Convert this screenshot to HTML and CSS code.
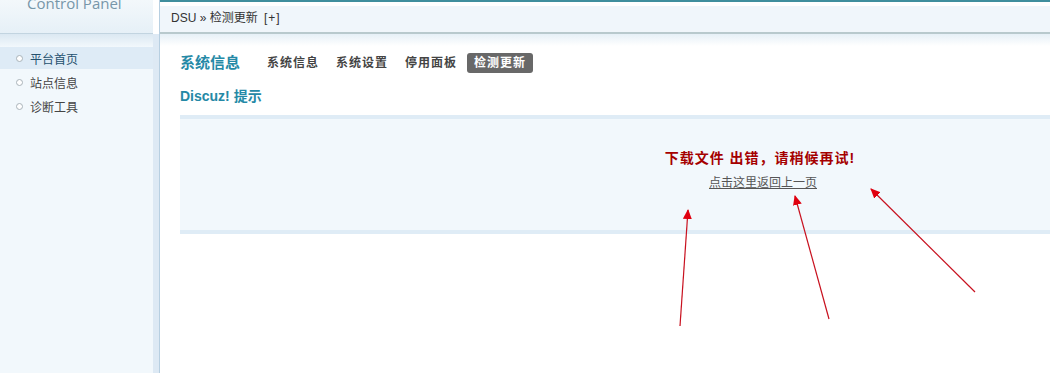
FILE: index.html
```html
<!DOCTYPE html>
<html>
<head>
  <meta charset="utf-8">
  <link rel="stylesheet" href="styles.css">
</head>
<body>
  <div class="page">
    <div class="side">
      <div class="side-head">
        <div class="logo-text">Control Panel</div>
      </div>
      <ul class="menu">
        <li class="menu-item active"><span class="dot"></span>平台首页</li>
        <li class="menu-item"><span class="dot"></span>站点信息</li>
        <li class="menu-item"><span class="dot"></span>诊断工具</li>
      </ul>
    </div>

    <div class="main">
      <div class="topbar">
        <div class="crumb">DSU &raquo; 检测更新 <span class="crumb-add">[+]</span></div>
        <div class="crumb-fade"></div>
      </div>

      <div class="content">
        <div class="tabs">
          <div class="tabs-title">系统信息</div>
          <a class="tab">系统信息</a>
          <a class="tab">系统设置</a>
          <a class="tab">停用面板</a>
          <a class="tab current">检测更新</a>
        </div>

        <div class="section-title">Discuz! 提示</div>

        <div class="notice">
          <div class="notice-msg">下载文件 出错，请稍候再试!</div>
          <a class="notice-link" href="#">点击这里返回上一页</a>
        </div>
      </div>
    </div>

    <!-- annotation arrows drawn over the page -->
    <svg class="marks" width="1050" height="373" viewBox="0 0 1050 373">
      <defs>
        <marker id="head" markerWidth="10" markerHeight="10" refX="9" refY="5" orient="auto" markerUnits="userSpaceOnUse">
          <path d="M0,0.5 L10,5 L0,9.5 Z" fill="#e0000f"/>
        </marker>
      </defs>
      <line x1="680" y1="326" x2="688" y2="210" stroke="#c8101e" stroke-width="1.2" marker-end="url(#head)"/>
      <line x1="829" y1="319" x2="795" y2="196" stroke="#c8101e" stroke-width="1.2" marker-end="url(#head)"/>
      <line x1="975" y1="292" x2="871" y2="189" stroke="#c8101e" stroke-width="1.2" marker-end="url(#head)"/>
    </svg>
  </div>
</body>
</html>
```

FILE: styles.css
```css
body {
  margin: 0;
  width: 1050px;
  height: 373px;
  overflow: hidden;
  background: #fff;
  font-family: "Liberation Sans", "Noto Sans CJK SC", sans-serif;
  font-size: 12px;
  color: #333;
}

.page {
  position: relative;
  display: flex;
  width: 1400px;
  height: 373px;
}

/* left column */
.side {
  width: 159px;
  flex: none;
  border-right: 1px solid #b7cfe1;
  display: flex;
  flex-direction: column;
}

.side-head {
  width: 153px;
  height: 33px;
  border-bottom: 1px solid #c2d4e0;
  background: linear-gradient(#f3f8fb, #e6f0f7);
  overflow: hidden;
}

.logo-text {
  margin: -7px 0 0 27px;
  font-family: "Open Sans", "Liberation Sans", sans-serif;
  font-size: 15px;
  line-height: 20px;
  color: #7796a9;
}

.menu {
  flex: 1;
  list-style: none;
  margin: 0;
  padding: 13px 0 0;
  border-right: 6px solid #dde9f4;
  background: linear-gradient(#dbe8f2, #f2f8fc 13px);
}

.menu-item {
  display: flex;
  align-items: center;
  height: 22px;
  margin-bottom: 2px;
  padding-left: 16px;
  color: #444;
}

.menu-item.active {
  background: #deebf6;
  color: #24506e;
}

.dot {
  width: 5px;
  height: 5px;
  margin-right: 7px;
  border: 1px solid #a9b3b9;
  border-radius: 50%;
  background: #fff;
}

/* right column */
.main {
  flex: 1;
  display: flex;
  flex-direction: column;
}

.topbar {
  border-top: 2px solid #3f8e9d;
  padding-top: 4px;
}

.crumb {
  height: 26px;
  line-height: 25px;
  padding-left: 11px;
  background: #f0f6fb;
  border-bottom: 2px solid #b8c9cd;
  color: #333;
}

.crumb-add {
  margin-left: 3px;
  letter-spacing: 1px;
}

.crumb-fade {
  height: 12px;
  background: linear-gradient(#e6f0f7, #fff);
}

.content {
  padding: 0 0 0 20px;
}

.tabs {
  display: flex;
  align-items: center;
  margin-top: 7px;
  height: 20px;
}

.tabs-title {
  margin: 0 20px 4px 0;
  font-size: 15px;
  font-weight: bold;
  color: #2589a6;
}

.tab {
  margin-right: 3px;
  padding: 0 7px;
  height: 20px;
  line-height: 20px;
  border-radius: 3px;
  font-weight: bold;
  letter-spacing: 1px;
  color: #444;
}

.tab.current {
  background: #686868;
  color: #fff;
}

.section-title {
  margin-top: 14px;
  height: 18px;
  line-height: 18px;
  font-size: 14px;
  font-weight: bold;
  color: #2589a6;
}

.notice {
  width: 1160px;
  margin-top: 10px;
  padding: 29px 0 37px;
  border-top: 4px solid #dfecf6;
  border-bottom: 4px solid #dfecf6;
  background: #f2f8fc;
  text-align: center;
}

.notice-msg {
  line-height: 20px;
  font-size: 14px;
  font-weight: bold;
  color: #a50000;
  letter-spacing: 1px;
}

.notice-link {
  display: inline-block;
  margin: 5px 0 0 6px;
  line-height: 20px;
  color: #555;
  text-decoration: underline;
}

.marks {
  position: absolute;
  left: 0;
  top: 0;
  pointer-events: none;
}
```
